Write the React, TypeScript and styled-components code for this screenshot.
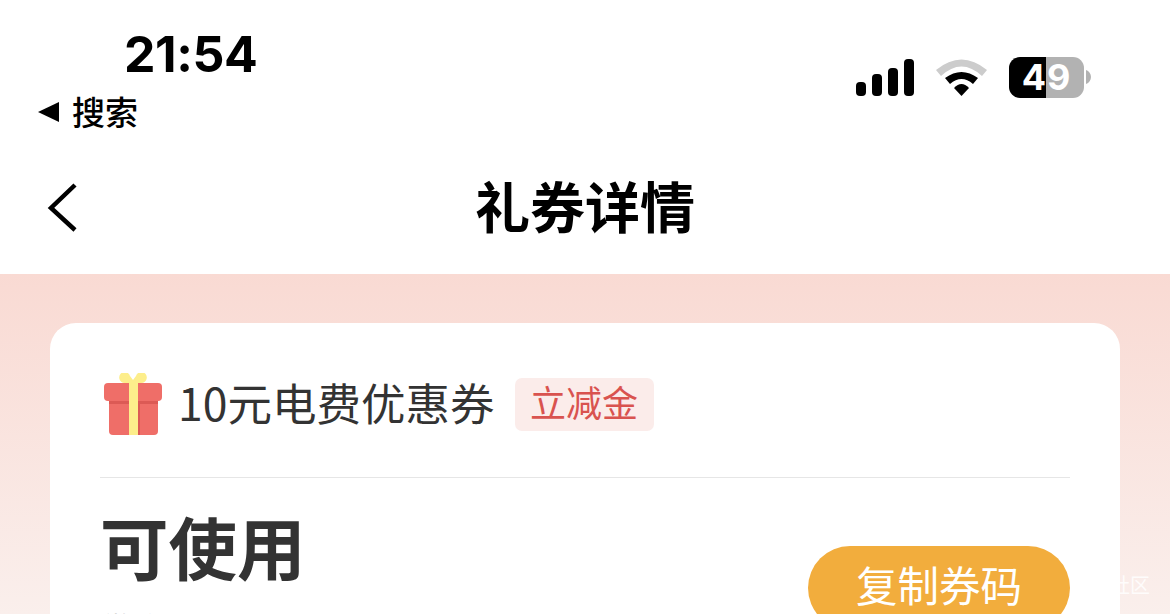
import React from "react";
import styled, { createGlobalStyle } from "styled-components";

const Global = createGlobalStyle`
  html, body { margin: 0; padding: 0; background: #fff; }
  body { font-family: "Noto Sans CJK SC", "Liberation Sans", sans-serif; }
`;
const Page = styled.div`
  width: 1170px; height: 614px; overflow: hidden; display: flex; flex-direction: column; position: relative;
`;
const StatusBar = styled.div`
  height: 144px; flex-shrink: 0; display: flex; justify-content: space-between; box-sizing: border-box; padding: 0 79px 0 38px;
`;
const LeftStatus = styled.div`
  display: flex; flex-direction: column; align-items: flex-start;
`;
const Time = styled.div`
  font: 700 50px/50px "Inter", "Liberation Sans", sans-serif; color: #000; margin: 29px 0 0 86px; letter-spacing: -0.4px;
`;
const BackToSearch = styled.div`
  display: flex; align-items: center; gap: 12px; margin-top: 12px; font: 500 33px/40px "Noto Sans CJK SC", sans-serif; color: #000;
`;
const SearchArrow = styled.svg`
  margin-top: 2px;
`;
const RightStatus = styled.div`
  display: flex; align-items: center; gap: 22px; margin-top: 42px; height: 70px;
`;
const Battery = styled.div`
  position: relative; width: 75px; height: 41px; border-radius: 11px; overflow: hidden; display: flex; align-items: center; justify-content: center;
  background: linear-gradient(90deg, #000 0 37px, #b2b2b2 37px 100%); color: #fff; font: 700 36px/41px "Inter", sans-serif;
  letter-spacing: 1px;
`;
const BatteryWrap = styled.div`
  display: flex; align-items: center; gap: 2px;
`;
const Nav = styled.div`
  height: 130px; flex-shrink: 0; position: relative; display: flex; align-items: center; justify-content: center;
`;
const Title = styled.div`
  font: 700 55px/60px "Noto Sans CJK SC", sans-serif; color: #000; margin-top: -10px;
`;
const BackIcon = styled.svg`
  position: absolute; left: 46px; top: 38px;
`;
const Body = styled.div`
  flex: 1; padding: 49px 50px 0; background: linear-gradient(180deg, #f9dad3 0, #faefec 340px); position: relative;
`;
const Card = styled.div`
  background: #fff; border-radius: 26px 26px 0 0; height: 400px; box-sizing: border-box; padding: 0 50px;
`;
const CardHead = styled.div`
  height: 155px; display: flex; align-items: center; border-bottom: 1px solid #e6e6e6; box-sizing: border-box; padding: 8px 0 0 3px;
`;
const GiftIcon = styled.svg`
  flex-shrink: 0;
`;
const CouponName = styled.div`
  font: 400 44.5px/60px "Noto Sans CJK SC", sans-serif; color: #333; margin: -4px 0 0 15px; white-space: nowrap;
`;
const Tag = styled.div`
  margin-left: 21px; width: 139px; height: 53px; border-radius: 7px; background: #fbecea; color: #d9534f;
  font: 400 36px/47px "Noto Sans CJK SC", sans-serif; text-align: center; text-indent: -2px;
`;
const StatusRow = styled.div`
  display: flex; justify-content: space-between;
`;
const StatusCol = styled.div`
  padding: 26px 0 0 0;
`;
const StatusText = styled.div`
  font: 700 68.5px/84px "Noto Sans CJK SC", sans-serif; color: #333;
`;
const SubText = styled.div`
  font: 400 30px/40px "Noto Sans CJK SC", sans-serif; color: #666; margin: 18px 0 0 2px;
`;
const CopyButton = styled.div`
  width: 262px; height: 84px; margin-top: 68px; border-radius: 42px; background: #f2ad3d; color: #fff;
  font: 400 41.5px/77px "Noto Sans CJK SC", sans-serif; text-align: center;
`;
const Watermark = styled.div`
  position: absolute; right: 20px; top: 299px; font: 400 20px/24px "Noto Sans CJK SC", sans-serif; color: rgba(255,255,255,.85);
`;

export default function App() {
  return (
    <Page>
      <Global />
      <StatusBar>
        <LeftStatus>
          <Time>21:54</Time>
          <BackToSearch>
            <SearchArrow width="22" height="20" viewBox="0 0 22 20"><path d="M0 10 L21 0 V20 Z" fill="#000" /></SearchArrow>
            <span>搜索</span>
          </BackToSearch>
        </LeftStatus>
        <RightStatus>
          <svg width="58" height="38" viewBox="0 0 58 38" fill="#000">
            <rect x="0" y="24" width="10" height="14" rx="4" />
            <rect x="16" y="16" width="10" height="22" rx="4" />
            <rect x="32" y="10" width="10" height="28" rx="4" />
            <rect x="48" y="1" width="10" height="37" rx="4" />
          </svg>
          <svg width="51" height="38" viewBox="0 0 51 38">
            <path d="M0 12 Q25.5 -9 51 12 L46 18 Q25.5 -1 5 18 Z" fill="#ccc" />
            <path d="M9 20 Q25.5 8 42 20 L37 26 Q25.5 16 14 26 Z" fill="#000" />
            <path d="M18 30 Q25.5 22 33 30 L25.5 38 Z" fill="#000" />
          </svg>
          <BatteryWrap>
            <Battery>49</Battery>
            <svg width="5" height="14" viewBox="0 0 5 14"><path d="M0 0 C3 1 5 4 5 7 C5 10 3 13 0 14 Z" fill="#b2b2b2" /></svg>
          </BatteryWrap>
        </RightStatus>
      </StatusBar>
      <Nav>
        <BackIcon width="34" height="50" viewBox="0 0 34 50">
          <path d="M29 3 L5 26 L29 48" fill="none" stroke="#000" strokeWidth="4.5" />
        </BackIcon>
        <Title>礼券详情</Title>
      </Nav>
      <Body>
        <Card>
          <CardHead>
            <GiftIcon width="60" height="63" viewBox="0 0 60 63">
              <path d="M30 12 L22 10 A5.5 5.5 0 1 1 27 3 L30 7 L33 3 A5.5 5.5 0 1 1 38 10 Z" fill="#fdee8b" />
              <rect x="6" y="16" width="49" height="46" rx="4" fill="#ef6e68" />
              <rect x="1" y="10" width="58" height="18" rx="4" fill="#ef6e68" />
              <rect x="6" y="28" width="49" height="3" fill="#dc5a55" />
              <rect x="35" y="31" width="2" height="31" fill="#dc5a55" />
              <rect x="26" y="8" width="9" height="54" fill="#fdee8b" />
            </GiftIcon>
            <CouponName>10元电费优惠券</CouponName>
            <Tag>立减金</Tag>
          </CardHead>
          <StatusRow>
            <StatusCol>
              <StatusText>可使用</StatusText>
              <SubText>微信</SubText>
            </StatusCol>
            <CopyButton>复制券码</CopyButton>
          </StatusRow>
        </Card>
        <Watermark>社区</Watermark>
      </Body>
    </Page>
  );
}
